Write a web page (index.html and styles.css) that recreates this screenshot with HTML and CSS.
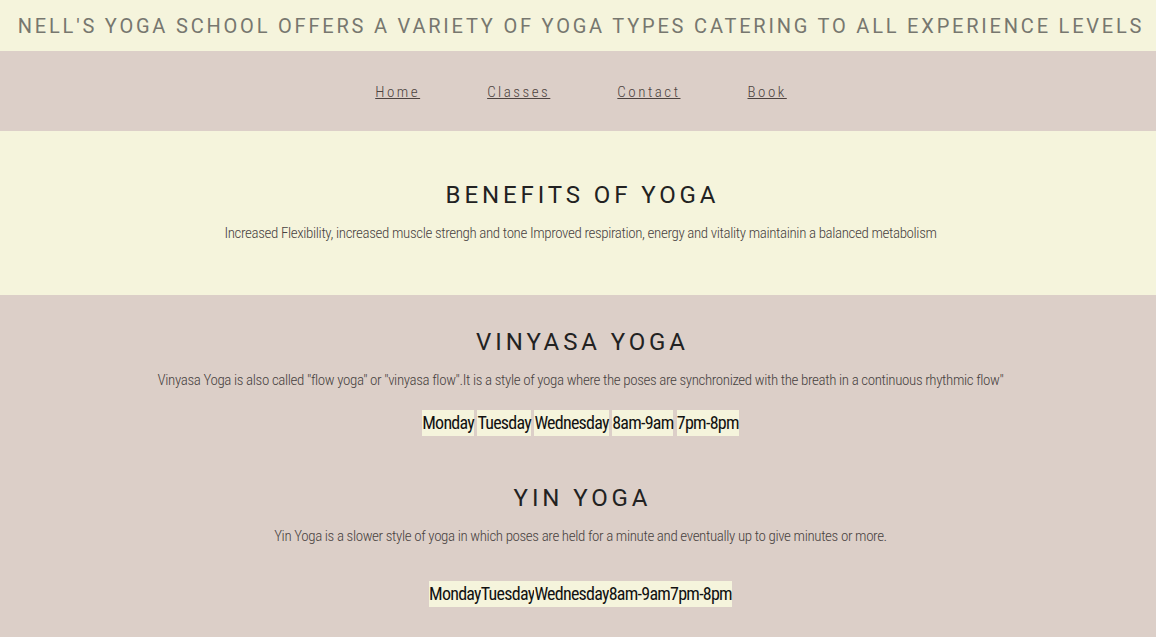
FILE: index.html
```html
<!DOCTYPE html>
<html>
<head>
<meta charset="utf-8">
<link rel="stylesheet" href="styles.css">
</head>
<body>
<header class="top">
  <h1 class="tagline">Nell's yoga school offers a variety of yoga types catering to all experience levels</h1>
</header>
<nav class="menu">
  <a href="#">Home</a>
  <a href="#">Classes</a>
  <a href="#">Contact</a>
  <a href="#">Book</a>
</nav>
<section class="benefits">
  <h2 class="title">Benefits of yoga</h2>
  <p class="text">Increased Flexibility, increased muscle strengh and tone Improved respiration, energy and vitality maintainin a balanced metabolism</p>
</section>
<section class="classes">
  <article class="yclass">
    <h2 class="title">Vinyasa yoga</h2>
    <p class="text">Vinyasa Yoga is also called "flow yoga" or "vinyasa flow".It is a style of yoga where the poses are synchronized with the breath in a continuous rhythmic flow"</p>
    <div class="schedule spaced"><span>Monday</span> <span>Tuesday</span> <span>Wednesday</span> <span>8am-9am</span> <span>7pm-8pm</span></div>
  </article>
  <article class="yclass yin">
    <h2 class="title">Yin yoga</h2>
    <p class="text">Yin Yoga is a slower style of yoga in which poses are held for a minute and eventually up to give minutes or more.</p>
    <div class="schedule"><span>Monday</span><span>Tuesday</span><span>Wednesday</span><span>8am-9am</span><span>7pm-8pm</span></div>
  </article>
</section>
</body>
</html>
```
FILE: styles.css
```css
html, body {
  margin: 0;
  padding: 0;
}
body {
  background: #dccfc8;
  font-family: "Roboto Condensed", "Open Sans Condensed", "DejaVu Sans Condensed", sans-serif;
  font-stretch: condensed;
}
.top {
  background: #f5f4dc;
  height: 51px;
  display: flex;
  align-items: center;
  justify-content: center;
  padding-left: 6px;
}
.tagline {
  margin: 0;
  font-family: Roboto, sans-serif;
  font-stretch: normal;
  font-weight: 400;
  font-size: 20px;
  letter-spacing: 2.8px;
  text-transform: uppercase;
  color: #77776f;
  white-space: nowrap;
}
.menu {
  height: 80px;
  box-sizing: border-box;
  padding: 2px 0 0 6px;
  display: flex;
  align-items: center;
  justify-content: center;
  gap: 67px;
}
.menu a {
  color: #4d4340;
  font-size: 15px;
  letter-spacing: 2.5px;
  text-decoration: underline;
  font-weight: 300;
}
.benefits {
  background: #f5f4dc;
  height: 164px;
  box-sizing: border-box;
  padding: 48px 0 0 5px;
  text-align: center;
}
.title {
  margin: 0;
  padding-left: 4px;
  font-family: Roboto, sans-serif;
  font-stretch: normal;
  font-weight: 400;
  font-size: 24px;
  letter-spacing: 3.9px;
  text-transform: uppercase;
  color: #222;
  line-height: 32px;
}
.text {
  margin: 12px 0 0;
  font-size: 15px;
  letter-spacing: -0.38px;
  font-weight: 300;
  color: #48423f;
  line-height: 20px;
}
.classes {
  text-align: center;
  padding: 31px 0 0 5px;
}
.yclass {
  margin-bottom: 46px;
}
.schedule {
  margin-top: 20px;
  font-size: 18px;
  letter-spacing: -0.75px;
  color: #111;
  line-height: 26px;
}
.schedule span {
  background: #f5f4dc;
  display: inline-block;
}
.yin .schedule {
  margin-top: 35px;
}
```
